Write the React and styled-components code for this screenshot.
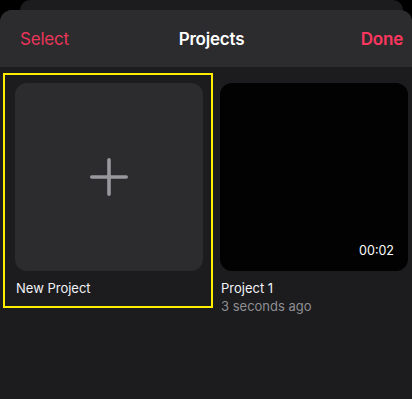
import React from "react";
import styled, { createGlobalStyle } from "styled-components";

const Global = createGlobalStyle`
  html, body { margin: 0; padding: 0; background: #000; }
  body { font-family: Inter, "Noto Sans", "Liberation Sans", sans-serif; -webkit-font-smoothing: antialiased; }
`;

const Page = styled.div`
  width: 412px;
  height: 399px;
  background: #000;
  overflow: hidden;
  display: flex;
  flex-direction: column;
`;

const BackCard = styled.div`
  height: 10px;
  margin: 0 9px 0 20px;
  background: #1c1c1e;
  border-radius: 11px 11px 0 0;
  flex-shrink: 0;
`;

const Sheet = styled.div`
  flex: 1;
  background: #1c1c1e;
  border-radius: 12px 12px 0 0;
  overflow: hidden;
  display: flex;
  flex-direction: column;
`;

const Header = styled.header`
  height: 57px;
  flex-shrink: 0;
  background: #2c2c2e;
  display: grid;
  grid-template-columns: 1fr auto 1fr;
  align-items: center;
  padding: 0 9px 0 20px;
  font-size: 17px;
  letter-spacing: -0.2px;
`;

const NavButton = styled.span`
  color: #ff375f;
  font-weight: ${(p) => (p.$bold ? 600 : 400)};
  justify-self: ${(p) => (p.$end ? "end" : "start")};
  opacity: ${(p) => (p.$bold ? 1 : 0.9)};
`;

const Title = styled.span`
  color: #fff;
  font-weight: 600;
`;

const Grid = styled.div`
  display: grid;
  grid-template-columns: 188px 188px;
  column-gap: 17px;
  padding: 16px 4px 0 15px;
`;

const Cell = styled.div`
  position: relative;
  display: flex;
  flex-direction: column;
`;

const Thumb = styled.div`
  position: relative;
  width: 188px;
  height: 188px;
  border-radius: 12px;
  background: ${(p) => (p.$dark ? "#020202" : "#2c2c2e")};
  display: flex;
  align-items: center;
  justify-content: center;
`;

const Duration = styled.span`
  position: absolute;
  right: 14px;
  bottom: 13px;
  color: #fff;
  font-size: 12.5px;
  letter-spacing: 0;
`;

const Name = styled.div`
  margin-top: 8px;
  padding-left: 1px;
  font-size: 13px;
  line-height: 18px;
  color: #f2f2f7;
`;

const Meta = styled.div`
  padding-left: 1px;
  font-size: 13px;
  line-height: 18px;
  color: #8e8e93;
`;

const Highlight = styled.div`
  position: absolute;
  left: -12px;
  top: -10px;
  width: 210px;
  height: 235px;
  box-sizing: border-box;
  border: 2px solid #ffee00;
  pointer-events: none;
`;

const PlusIcon = () => (
  <svg width="38" height="38" viewBox="0 0 38 38" fill="none">
    <path d="M19 1.8v34.4M1.8 19h34.4" stroke="#98989d" strokeWidth="3.6" strokeLinecap="round" />
  </svg>
);

export default function App() {
  return (
    <Page>
      <Global />
      <BackCard />
      <Sheet>
        <Header>
          <NavButton>Select</NavButton>
          <Title>Projects</Title>
          <NavButton $bold $end>Done</NavButton>
        </Header>
        <Grid>
          <Cell>
            <Thumb>
              <PlusIcon />
            </Thumb>
            <Name>New Project</Name>
            <Highlight />
          </Cell>
          <Cell>
            <Thumb $dark>
              <Duration>00:02</Duration>
            </Thumb>
            <Name>Project 1</Name>
            <Meta>3 seconds ago</Meta>
          </Cell>
        </Grid>
      </Sheet>
    </Page>
  );
}
